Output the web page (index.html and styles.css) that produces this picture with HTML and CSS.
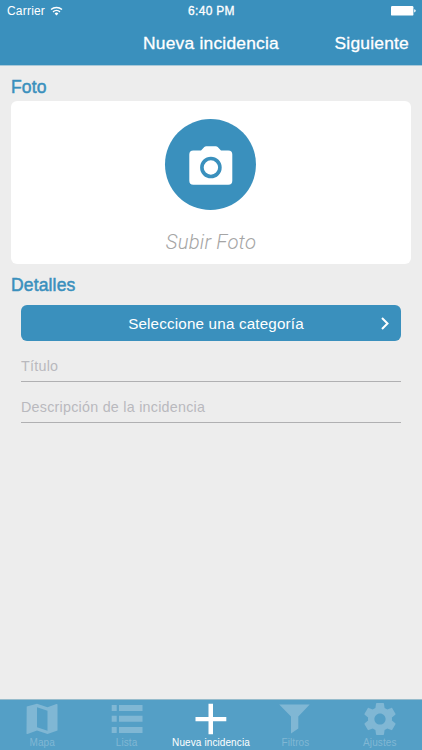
FILE: index.html
```html
<!DOCTYPE html>
<html lang="es">
<head>
    <meta charset="UTF-8">
    <meta name="viewport" content="width=device-width, initial-scale=1.0">
    <title>Nueva incidencia</title>
    <link rel="stylesheet" href="styles.css">
</head>
<body>
    <header class="header">
        <div class="status">
            <div class="carrier">
                <span>Carrier</span>
                <svg class="wifi" viewBox="0 0 13 10">
                    <path d="M1 3.6a8.2 8.2 0 0 1 11 0M3 5.9a5.3 5.3 0 0 1 7 0" fill="none" stroke="#fff" stroke-width="1.4"/>
                    <path d="M4.6 7.5a2.8 2.8 0 0 1 3.800 0L6.500 9.500z" fill="#fff"/>
                </svg>
            </div>
            <div class="time">6:40 PM</div>
            <svg class="battery" viewBox="0 0 25 10">
                <rect width="22.4" height="9.6" rx="1.2" fill="#fff"/>
                <path d="M23.2 3.2q1.5.3 1.5 1.6t-1.5 1.6z" fill="#fff"/>
            </svg>
        </div>
        <nav class="navbar">
            <h1 class="title">Nueva incidencia</h1>
            <a class="next">Siguiente</a>
        </nav>
    </header>

    <main class="content">
        <h2 class="section-title">Foto</h2>
        <div class="photo-card">
            <div class="photo-button">
                <svg class="camera" viewBox="0 0 44 40">
                    <path d="M4 4.500h8L15.300 1q.8-.8 2-.8h9.400q1.200 0 2 .8L32 4.500h7.300a4 4 0 0 1 4 4v26.200a4 4 0 0 1-4 4H4.300a4 4 0 0 1-4-4V8.500a4 4 0 0 1 4-4z" fill="#fff"/>
                    <circle cx="21.900" cy="21.500" r="9" fill="#fff" stroke="#3a90bd" stroke-width="3.600"/>
                </svg>
            </div>
            <p class="photo-text">Subir Foto</p>
        </div>

        <h2 class="section-title details-title">Detalles</h2>
        <div class="form">
            <button class="category" type="button">
                <span>Seleccione una categoría</span>
                <svg class="chevron" viewBox="0 0 8 13">
                    <path d="M1 1l5.500 5.500L1 12" fill="none" stroke="#fff" stroke-width="2"/>
                </svg>
            </button>
            <input class="field" type="text" placeholder="Título">
            <input class="field" type="text" placeholder="Descripción de la incidencia">
        </div>
    </main>

    <footer class="tabs">
        <a class="tab">
            <svg class="tab-icon" viewBox="0 0 32 32">
                <path fill-rule="evenodd" d="M.7 3.500L11 .8l10.500 3.500L30.500 1q1-.3 1 .8V27.500L21.500 31 11 27.400 1.500 31q-1 .4-1-.8zM11 4.300v20l10.500 3.400V7.800z"/>
            </svg>
            <span>Mapa</span>
        </a>
        <a class="tab">
            <svg class="tab-icon" viewBox="0 0 32 32">
                <path d="M.7 2h5v6h-5zM8 2h23.500v6H8zM.7 12.800h5v6h-5zM8 12.800h23.500v6H8zM.7 24h5v6h-5zM8 24h23.500v6H8z"/>
            </svg>
            <span>Lista</span>
        </a>
        <a class="tab active">
            <svg class="tab-icon" viewBox="0 0 32 32">
                <path d="M13.500 .8h4.500V14h13.300v4.300H18v13h-4.500v-13H.5V14h13z"/>
            </svg>
            <span>Nueva incidencia</span>
        </a>
        <a class="tab">
            <svg class="tab-icon" viewBox="0 0 32 32">
                <path d="M.2 1.500h30.500L19.300 13.500V25.500L12 30.500V13.500z"/>
            </svg>
            <span>Filtros</span>
        </a>
        <a class="tab">
            <svg class="tab-icon" viewBox="2 2 20 20">
                <path d="M19.430 12.980c.040-.320.070-.640.070-.980s-.030-.660-.070-.980l2.110-1.650c.190-.150.240-.420.120-.640l-2-3.460c-.120-.220-.390-.300-.610-.220l-2.490 1c-.520-.400-1.080-.730-1.690-.980l-.380-2.650C14.460 2.180 14.250 2 14 2h-4c-.250 0-.460.180-.490.420l-.380 2.650c-.610.250-1.170.590-1.690.980l-2.490-1c-.230-.090-.490 0-.610.220l-2 3.460c-.130.220-.070.490.120.640l2.110 1.650c-.040.320-.070.650-.070.980s.030.660.070.980l-2.110 1.650c-.190.150-.240.420-.120.640l2 3.460c.120.220.390.300.610.220l2.490-1c.520.400 1.080.730 1.690.980l.380 2.650c.030.240.240.420.490.420h4c.250 0 .460-.180.490-.420l.380-2.650c.610-.250 1.170-.590 1.690-.980l2.490 1c.230.090.490 0 .610-.220l2-3.460c.120-.220.070-.490-.120-.640l-2.110-1.650zM12 15.500c-1.930 0-3.500-1.570-3.500-3.500s1.570-3.500 3.500-3.500 3.500 1.570 3.500 3.500-1.570 3.500-3.500 3.500z"/>
            </svg>
            <span>Ajustes</span>
        </a>
    </footer>
</body>
</html>
```

FILE: styles.css
```css
* {
    box-sizing: border-box;
}
body {
    margin: 0;
    height: 750px;
    display: flex;
    flex-direction: column;
    overflow: hidden;
    background-color: #ededed;
    font-family: "Liberation Sans", Arial, sans-serif;
}
.header {
    height: 66px;
    background-color: #3a90bd;
    color: #fff;
    border-bottom: 1px solid #a9c9d9;
}
.status {
    display: grid;
    grid-template-columns: 1fr auto 1fr;
    align-items: center;
    height: 22px;
    padding: 0 6px 0 7px;
    font-size: 12px;
    letter-spacing: 0.2px;
}
.carrier {
    display: flex;
    align-items: center;
    gap: 5px;
}
.wifi {
    width: 13px;
    height: 10px;
}
.time {
    letter-spacing: 0.3px;
    -webkit-text-stroke: 0.3px #fff;
}
.battery {
    width: 25px;
    height: 10px;
    justify-self: end;
}
.navbar {
    display: grid;
    grid-template-columns: 1fr auto 1fr;
    align-items: center;
    height: 43px;
    padding: 0 13px;
    font-size: 17.4px;
    letter-spacing: 0.22px;
    -webkit-text-stroke: 0.3px #fff;
}
.title {
    grid-column: 2;
    margin: 0;
    font-size: inherit;
    font-weight: normal;
}
.next {
    justify-self: end;
}
.content {
    flex: 1;
    padding: 10px 11px 0;
}
.section-title {
    margin: 0;
    height: 25px;
    line-height: 22px;
    font-size: 17.5px;
    font-weight: normal;
    letter-spacing: 0.15px;
    color: #3a90bd;
    -webkit-text-stroke: 0.5px #3a90bd;
}
.photo-card {
    display: flex;
    flex-direction: column;
    align-items: center;
    height: 163px;
    padding-top: 18px;
    border-radius: 6px;
    background-color: #fff;
}
.photo-button {
    display: flex;
    align-items: center;
    justify-content: center;
    width: 91px;
    height: 91px;
    margin-right: 1px;
    border-radius: 50%;
    background-color: #3a90bd;
}
.camera {
    width: 44px;
    height: 40px;
    margin-top: 2px;
}
.photo-text {
    margin: 20px 0 0;
    font-family: Roboto, "Liberation Sans", sans-serif;
    font-size: 20.3px;
    font-style: italic;
    font-weight: 300;
    line-height: 24px;
    letter-spacing: 0.2px;
    color: #a5a5a5;
}
.details-title {
    margin-top: 10px;
    height: 31px;
}
.form {
    padding: 0 10px;
}
.category {
    display: grid;
    grid-template-columns: 1fr auto 1fr;
    align-items: center;
    width: 100%;
    height: 36px;
    margin: 0;
    padding: 0 12px;
    border: 0;
    border-radius: 6px;
    background-color: #3a90bd;
    color: #fff;
    font-family: inherit;
    font-size: 15.2px;
    letter-spacing: 0.18px;
}
.category span {
    grid-column: 2;
    margin: 0 -5px 0 5px;
}
.chevron {
    width: 8px;
    height: 13px;
    justify-self: end;
}
.field {
    display: block;
    width: 100%;
    height: 41px;
    padding: 10px 0 0;
    border: 0;
    border-bottom: 1px solid #b0b0b2;
    border-radius: 0;
    outline: 0;
    background: transparent;
    font-family: inherit;
    font-size: 14.3px;
    letter-spacing: 0.25px;
}
.field::placeholder {
    color: #b9b9be;
    opacity: 1;
}
.tabs {
    display: grid;
    grid-template-columns: repeat(5, 1fr);
    height: 51px;
    border-top: 1px solid #97bccc;
    background-color: #549fc6;
}
.tab {
    display: flex;
    flex-direction: column;
    align-items: center;
    padding-top: 3px;
    color: #80b7d4;
    font-size: 10px;
    line-height: 12px;
    letter-spacing: 0.1px;
    white-space: nowrap;
}
.tab-icon {
    width: 32px;
    height: 32px;
    margin-bottom: 2px;
    fill: currentColor;
}
.active {
    color: #fff;
}
```
